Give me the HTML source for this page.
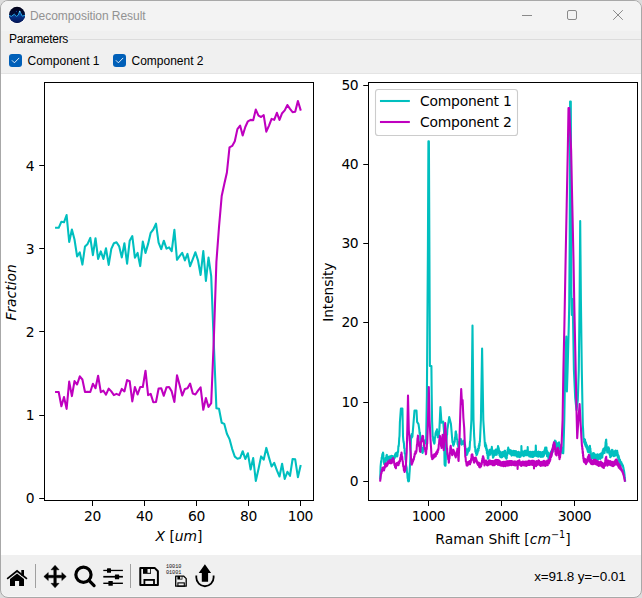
<!DOCTYPE html>
<html>
<head>
<meta charset="utf-8">
<title>Decomposition Result</title>
<style>
html,body{margin:0;padding:0;}
body{width:642px;height:598px;overflow:hidden;background:#dcdcdc;position:relative;font-family:"Liberation Sans",sans-serif;}
#win{position:absolute;left:0;top:0;width:640px;height:596px;border:1px solid #a8a8a8;box-shadow:inset 0 -1px 0 #f6f6f6;border-radius:8px;background:#f0f0f0;overflow:hidden;}
#title{position:absolute;left:0;top:0;width:640px;height:30px;background:#f3f3f3;}
#title .t{position:absolute;left:29px;top:8px;letter-spacing:-0.06px;font-size:12px;color:#929292;white-space:nowrap;}
#gb{position:absolute;left:8px;top:31px;letter-spacing:-0.3px;font-size:12px;color:#000;white-space:nowrap;line-height:14px;}
#gbline{position:absolute;left:68px;top:38px;width:572px;height:1px;background:#dcdcdc;}
.cb{position:absolute;top:53px;width:13px;height:13px;border-radius:3px;background:#005fb8;}
.cbl{position:absolute;top:53px;font-size:12px;line-height:14px;color:#000;white-space:nowrap;}
#canvas{position:absolute;left:0px;top:73px;width:640px;height:481px;background:#fff;}
#sep{position:absolute;left:0;top:72px;width:640px;height:1px;background:#e4e4e4;}
svg.plot{position:absolute;left:0;top:0;}
#status{position:absolute;right:15.5px;top:567.5px;letter-spacing:-0.15px;font-size:13.5px;line-height:15px;color:#000;white-space:nowrap;}
</style>
</head>
<body>
<div id="win">
  <div id="title"><span class="t">Decomposition Result</span></div>
  <div id="gb">Parameters</div>
  <div id="gbline"></div>
  <div class="cb" style="left:8px"></div><div class="cbl" style="left:26.5px">Component 1</div>
  <div class="cb" style="left:112px"></div><div class="cbl" style="left:130.5px">Component 2</div>
  <div id="sep"></div>
  <div id="canvas"></div>
  <div id="status">x=91.8 y=−0.01</div>
</div>
<svg class="plot" width="642" height="598" viewBox="0 0 642 598">
<g font-family="'DejaVu Sans', 'Liberation Sans', sans-serif" font-size="13.89" fill="#000">
<g fill="none" stroke-width="2.08" stroke-linejoin="round" stroke-linecap="square">
<polyline stroke="#00bfbf" points="56.1,227.8 58.7,227.8 61.4,221.7 64.0,222.3 66.6,215.0 69.2,242.0 71.9,229.5 74.5,239.5 77.1,256.4 79.8,252.4 82.4,264.6 85.0,246.4 87.6,243.9 90.3,237.9 92.9,255.2 95.5,238.2 98.1,258.9 100.8,251.4 103.4,258.9 106.0,248.3 108.7,264.9 111.3,248.9 113.9,243.2 116.5,242.2 119.2,246.4 121.8,257.4 124.4,243.2 127.1,263.7 129.7,240.7 132.3,236.1 134.9,257.7 137.6,252.9 140.2,266.1 142.8,241.6 145.5,252.9 148.1,243.9 150.7,232.8 153.3,229.5 156.0,223.6 158.6,242.6 161.2,249.1 163.8,240.7 166.5,248.6 169.1,247.4 171.7,251.1 174.4,229.8 177.0,259.8 179.6,256.2 182.2,252.8 184.9,260.4 187.5,253.9 190.1,266.2 192.8,259.2 195.4,252.2 198.0,260.4 200.6,275.0 203.3,251.0 205.9,280.9 208.5,257.5 211.2,276.2 213.8,343.0 216.4,408.2 219.0,408.8 221.7,422.7 224.3,423.9 226.9,433.8 229.5,439.1 232.2,449.1 234.8,456.6 237.4,458.7 240.1,458.0 242.7,451.2 245.3,459.0 247.9,453.3 250.6,469.4 253.2,458.0 255.8,481.0 258.5,469.0 261.1,456.4 263.7,459.7 266.3,447.9 269.0,457.6 271.6,466.5 274.2,462.8 276.9,470.4 279.5,476.5 282.1,463.7 284.7,478.9 287.4,471.8 290.0,475.8 292.6,459.0 295.2,459.4 297.9,477.2 300.5,466.1"/>
<polyline stroke="#bf00bf" points="56.1,392.0 58.7,392.0 61.4,406.2 64.0,397.0 66.6,408.9 69.2,381.6 71.9,396.1 74.5,381.1 77.1,384.5 79.8,376.3 82.4,379.5 85.0,392.0 87.6,391.7 90.3,392.0 92.9,383.8 95.5,388.2 98.1,375.7 100.8,392.2 103.4,390.7 106.0,394.7 108.7,388.6 111.3,391.4 113.9,395.1 116.5,393.9 119.2,395.1 121.8,388.9 124.4,391.4 127.1,380.1 129.7,381.3 132.3,401.4 134.9,387.0 137.6,394.5 140.2,387.0 142.8,387.0 145.5,370.7 148.1,395.1 150.7,393.9 153.3,402.3 156.0,402.0 158.6,388.5 161.2,388.2 163.8,395.8 166.5,387.4 169.1,387.0 171.7,391.4 174.4,402.0 177.0,375.3 179.6,385.1 182.2,395.5 184.9,388.9 187.5,388.2 190.1,383.6 192.8,393.6 195.4,394.5 198.0,390.7 200.6,387.4 203.3,409.8 205.9,398.0 208.5,407.0 211.2,403.2 213.8,340.0 216.4,262.0 219.0,227.0 221.7,196.0 224.3,184.0 226.9,172.5 229.5,147.3 232.2,145.9 234.8,141.2 237.4,129.1 240.1,125.6 242.7,135.5 245.3,127.0 247.9,121.3 250.6,119.9 253.2,120.3 255.8,109.6 258.5,115.6 261.1,117.0 263.7,115.2 266.3,131.7 269.0,125.6 271.6,118.9 274.2,119.9 276.9,112.8 279.5,119.9 282.1,113.2 284.7,110.4 287.4,105.0 290.0,108.9 292.6,112.1 295.2,111.8 297.9,101.0 300.5,109.6"/>
<polyline stroke="#00bfbf" points="380.2,478.5 380.6,466.4 381.1,461.1 381.4,462.3 381.7,457.5 382.0,458.4 382.1,456.4 382.4,454.0 382.7,455.8 383.0,452.6 383.2,453.1 383.5,456.9 383.8,458.0 384.1,463.4 384.3,464.2 384.6,462.9 384.9,464.8 385.2,461.9 385.4,463.0 385.7,462.4 386.0,457.6 386.3,457.9 386.5,455.3 386.8,454.9 387.1,458.8 387.4,457.8 387.6,459.7 387.9,460.9 388.2,457.8 388.5,460.2 388.7,458.6 389.0,456.6 389.3,460.3 389.6,457.0 389.9,459.9 390.2,456.3 390.3,458.6 390.6,459.8 390.9,456.5 391.2,458.7 391.5,455.9 391.8,459.3 392.0,457.0 392.3,456.0 392.6,458.9 392.9,456.4 393.2,459.8 393.5,457.1 393.7,458.6 394.0,459.4 394.3,456.0 394.6,458.2 394.8,456.4 395.1,454.3 395.4,456.8 395.7,453.2 396.0,456.2 396.3,452.8 396.4,453.7 396.7,455.4 397.0,452.9 397.3,456.4 397.5,455.3 397.8,451.5 398.1,451.9 398.4,446.1 398.6,446.5 398.9,444.2 399.2,438.5 399.5,436.0 399.9,422.0 400.9,408.5 402.4,408.5 403.0,436.0 403.3,440.1 403.6,442.1 403.9,443.1 404.2,448.3 404.5,448.3 404.8,453.8 404.9,453.1 405.2,453.9 405.5,459.5 405.8,460.1 406.1,465.2 406.4,466.4 406.7,467.9 407.0,472.8 407.3,473.2 407.6,478.3 407.9,478.6 408.0,480.7 408.3,481.4 408.6,478.5 408.9,481.2 409.1,479.6 409.4,474.4 409.7,470.4 410.0,464.7 410.2,461.9 411.1,435.5 411.4,437.5 411.7,434.1 412.0,437.4 412.3,435.3 412.4,436.6 413.5,423.0 414.5,410.5 416.5,410.5 417.1,421.9 418.5,424.1 419.3,429.6 419.6,433.4 419.9,432.4 420.2,436.0 420.5,440.8 420.8,443.2 421.1,448.0 421.4,450.2 421.7,447.9 422.0,451.8 422.3,449.4 422.6,453.0 422.8,452.4 423.1,449.0 423.4,449.8 423.7,445.6 424.0,445.9 424.3,441.4 424.4,442.5 424.7,444.0 425.0,440.3 425.3,442.9 425.6,439.9 425.9,443.3 426.1,441.4 426.9,395.0 427.9,250.0 428.4,141.4 428.9,141.4 429.4,250.0 429.9,366.0 431.4,366.0 431.7,395.0 432.1,421.5 432.7,436.9 433.0,436.8 433.3,440.9 433.6,439.2 433.9,443.0 434.2,441.3 434.3,443.6 434.6,442.7 434.9,437.5 435.2,437.6 435.5,433.6 435.8,432.1 436.1,434.6 436.4,430.9 436.7,432.9 437.0,429.3 437.1,430.9 437.4,434.4 437.7,432.3 438.0,437.4 438.2,436.9 438.5,433.6 438.8,435.5 439.1,431.1 439.3,431.4 440.4,407.0 441.5,422.6 443.2,421.5 444.0,431.0 444.6,464.5 444.9,465.6 445.2,462.8 445.5,465.6 445.6,464.0 446.5,440.0 446.8,435.4 447.1,434.8 447.4,428.8 447.6,428.1 449.2,417.1 450.9,423.7 452.2,439.2 452.5,442.3 452.8,441.7 453.1,444.7 453.4,445.8 453.7,442.4 454.0,444.4 454.3,441.8 454.4,442.5 454.7,441.7 455.0,437.2 455.3,437.3 455.6,431.9 455.9,431.4 456.2,434.8 456.5,434.2 456.8,439.3 457.0,439.2 457.3,439.4 457.6,444.1 457.9,443.0 458.1,445.8 458.4,447.0 458.7,443.1 459.0,445.3 459.2,443.6 459.5,441.7 459.8,443.8 460.1,439.5 460.4,442.0 460.5,440.0 460.8,438.9 461.1,442.9 461.4,440.4 461.7,444.6 462.0,444.0 462.3,442.0 462.6,444.0 462.9,441.5 463.2,442.8 463.5,441.0 463.8,440.6 464.1,444.4 464.4,442.3 464.7,446.4 465.0,444.5 465.3,446.9 465.6,449.2 465.9,448.7 466.2,452.7 466.5,451.4 466.8,455.2 466.9,454.6 467.2,452.1 467.5,453.7 467.8,449.4 468.1,452.0 468.4,448.2 468.6,449.1 468.9,450.9 469.2,447.6 469.4,449.8 469.7,447.3 470.0,441.5 470.3,440.7 470.5,436.6 471.4,420.0 472.5,325.5 473.5,420.0 474.2,436.6 474.5,440.6 474.7,445.5 474.9,447.6 475.2,447.2 475.4,451.6 475.7,449.9 476.0,453.5 476.2,451.4 476.5,455.1 476.6,454.2 476.9,452.1 477.1,454.5 477.4,450.4 477.6,452.8 477.9,448.7 478.2,449.8 478.5,450.7 478.7,445.8 479.0,448.2 479.2,443.7 479.5,445.8 479.7,441.5 479.9,442.1 480.9,420.0 482.1,348.5 483.3,420.0 484.8,443.2 485.0,446.1 485.3,442.9 485.5,447.2 485.7,444.3 485.9,448.4 486.2,445.5 486.4,450.2 486.5,448.7 486.7,448.2 486.9,453.2 487.2,449.8 487.4,455.3 487.6,452.8 487.8,458.5 488.0,454.9 488.1,457.5 488.3,458.8 488.5,454.4 488.7,455.9 488.9,451.5 489.2,452.0 489.4,453.5 489.6,449.8 489.8,454.5 490.0,450.9 490.2,454.6 490.4,453.1 490.6,451.3 490.8,453.1 491.0,449.6 491.2,452.5 491.4,448.8 491.6,451.4 491.8,446.8 492.0,448.7 492.2,451.7 492.4,449.9 492.6,455.7 492.8,452.1 493.0,457.8 493.1,456.4 493.3,454.0 493.5,457.0 493.7,452.5 493.9,456.3 494.1,452.0 494.2,455.2 494.4,450.7 494.6,454.3 494.8,452.0 495.0,450.9 495.2,454.5 495.4,450.6 495.5,454.0 495.7,449.6 495.9,454.9 496.1,451.6 496.3,454.8 496.4,453.1 496.6,449.8 496.8,454.8 496.9,449.7 497.1,452.5 497.3,449.0 497.5,452.4 497.7,447.9 497.8,451.8 498.0,446.0 498.1,448.7 498.3,451.0 498.5,447.4 498.6,452.3 498.8,448.5 499.0,453.5 499.2,450.6 499.4,455.2 499.5,451.7 499.7,454.2 499.9,456.2 500.1,452.8 500.2,457.0 500.4,451.7 500.6,456.8 500.8,452.2 501.0,456.2 501.1,453.1 501.3,457.4 501.4,455.3 501.6,453.2 501.8,457.1 501.9,453.7 502.1,457.1 502.3,452.4 502.5,456.2 502.7,452.1 502.8,456.3 503.0,454.2 503.2,452.5 503.4,455.7 503.5,452.1 503.7,455.6 503.9,452.5 504.1,456.1 504.3,452.0 504.4,455.0 504.6,450.9 504.7,453.1 504.9,456.3 505.1,450.9 505.2,456.9 505.4,453.3 505.6,457.7 505.8,454.5 506.0,458.2 506.1,454.7 506.3,458.8 506.4,457.5 506.6,454.0 506.8,458.1 506.9,453.2 507.1,455.7 507.3,451.9 507.5,454.0 507.7,449.5 507.8,453.1 508.0,449.8 508.2,447.5 508.4,451.5 508.5,449.4 508.7,452.7 508.9,449.4 509.1,453.0 509.3,449.5 509.4,453.4 509.6,449.7 509.8,453.4 510.0,452.0 510.2,450.0 510.4,454.3 510.5,450.5 510.7,454.3 510.9,450.2 511.0,453.0 511.2,454.4 511.4,451.1 511.5,455.6 511.7,451.4 511.9,453.2 512.1,455.2 512.3,451.5 512.4,455.0 512.6,451.7 512.8,453.4 513.0,454.9 513.2,450.7 513.3,455.1 513.5,451.2 513.7,453.1 513.9,455.2 514.1,451.0 514.2,455.5 514.4,451.1 514.6,452.7 514.8,455.1 515.0,451.3 515.1,455.3 515.3,451.4 515.5,453.0 515.7,454.8 515.9,451.0 516.0,455.7 516.2,451.6 516.4,453.8 516.6,455.7 516.8,452.1 516.9,456.6 517.1,452.2 517.3,454.7 517.5,456.5 517.7,452.3 517.8,456.8 518.0,452.5 518.2,454.8 518.4,456.8 518.6,451.8 518.7,456.4 518.9,452.9 519.1,454.6 519.3,457.0 519.5,453.4 519.6,457.1 519.8,452.7 520.0,454.5 520.2,456.5 520.4,452.4 520.5,456.8 520.7,452.4 520.9,454.3 521.1,455.8 521.3,451.7 521.4,446.0 521.6,451.8 521.8,454.1 522.0,455.1 522.2,451.4 522.3,455.5 522.5,452.4 522.7,453.8 522.9,455.2 523.1,451.5 523.2,454.8 523.4,451.9 523.6,453.4 523.8,456.1 524.0,451.5 524.1,455.3 524.3,451.3 524.5,453.0 524.7,454.8 524.9,450.8 525.0,454.1 525.2,450.7 525.4,452.8 525.6,455.2 525.8,451.3 525.9,454.8 526.1,450.9 526.3,452.9 526.5,454.2 526.7,451.1 526.8,455.3 527.0,450.5 527.2,453.1 527.4,454.9 527.6,452.0 527.7,447.0 527.9,451.8 528.1,453.5 528.3,455.3 528.5,452.7 528.6,455.5 528.8,451.6 529.0,454.0 529.2,456.4 529.4,452.1 529.5,456.3 529.7,452.6 529.9,454.5 530.1,456.0 530.3,452.9 530.4,456.6 530.6,451.8 530.8,454.6 531.0,456.8 531.2,452.6 531.3,456.7 531.5,453.2 531.7,454.6 531.9,456.1 532.1,452.8 532.2,456.9 532.4,451.7 532.6,454.6 532.8,456.7 533.0,452.1 533.1,457.0 533.3,452.8 533.5,454.4 533.7,456.4 533.9,451.9 534.0,456.2 534.2,452.0 534.4,453.8 534.6,455.7 534.8,451.5 534.9,455.2 535.1,451.3 535.3,453.2 535.5,455.8 535.7,451.1 535.8,445.5 536.0,451.4 536.2,453.5 536.4,456.0 536.6,452.7 536.7,455.5 536.9,451.7 537.1,453.9 537.3,456.3 537.5,452.0 537.6,456.5 537.8,452.6 538.0,454.3 538.2,456.7 538.4,451.5 538.5,456.0 538.7,452.4 538.9,454.4 539.1,456.3 539.3,452.3 539.4,456.2 539.6,452.2 539.8,454.6 540.0,456.3 540.2,453.1 540.3,456.6 540.5,452.0 540.7,454.7 540.9,456.9 541.1,452.7 541.2,456.2 541.4,453.1 541.6,454.7 541.8,456.7 542.0,452.4 542.1,456.0 542.3,452.6 542.5,454.3 542.7,456.6 542.9,452.1 543.0,456.6 543.2,451.7 543.4,454.0 543.6,456.0 543.8,451.4 543.9,455.8 544.1,451.9 544.3,453.9 544.5,453.6 544.7,449.5 544.8,452.3 545.0,449.2 545.2,447.6 545.4,451.9 545.5,448.2 545.7,452.6 545.9,449.0 546.1,453.7 546.3,450.4 546.4,447.5 546.6,450.4 546.8,452.9 547.0,456.2 547.2,451.0 547.3,455.7 547.5,452.2 547.7,455.9 547.9,452.3 548.1,456.7 548.2,453.6 548.4,458.3 548.6,453.0 548.8,458.2 549.0,453.3 549.1,457.3 549.3,454.2 549.5,458.4 549.6,456.6 549.8,454.4 550.0,458.1 550.1,453.2 550.3,457.3 550.5,453.3 550.7,457.2 550.9,451.7 551.0,456.1 551.2,451.2 551.4,454.9 551.6,450.7 551.8,453.9 551.9,450.3 552.1,453.3 552.3,449.5 552.4,451.0 552.6,451.9 552.8,448.1 552.9,450.9 553.1,446.2 553.3,450.1 553.5,445.2 553.7,448.8 553.8,444.3 554.0,446.9 554.2,442.8 554.4,446.1 554.6,441.9 554.7,445.1 554.9,440.6 555.1,441.8 555.3,444.2 555.5,441.0 555.6,445.4 555.8,441.3 556.0,445.9 556.2,443.0 556.4,447.5 556.5,443.9 556.7,448.0 556.9,445.1 557.0,447.3 557.2,449.2 557.4,443.9 557.5,448.5 557.7,444.0 557.9,448.0 558.1,443.1 558.3,447.3 558.4,442.8 558.6,447.0 558.8,443.7 559.0,442.3 559.2,446.8 559.3,444.0 559.5,448.0 559.7,444.5 559.9,448.1 560.1,445.6 560.2,449.4 560.4,446.4 560.6,451.2 560.7,449.2 560.9,447.6 561.1,452.1 561.2,447.3 561.4,451.1 561.6,447.7 561.8,452.8 562.0,448.1 562.1,452.3 562.3,447.9 562.5,452.0 562.7,448.4 562.9,453.1 563.0,448.9 563.2,453.3 563.4,451.0 564.3,420.0 565.3,360.0 566.3,336.5 566.9,391.5 567.6,370.0 568.8,325.0 569.2,305.0 569.7,240.0 570.0,150.0 570.1,101.6 570.8,101.6 571.0,150.0 571.1,200.0 571.3,290.0 571.8,315.0 572.6,299.0 573.2,330.0 573.9,370.0 575.2,398.0 576.5,410.0 577.8,400.0 578.8,370.0 579.6,300.0 580.2,221.0 580.9,300.0 581.8,370.0 582.8,425.0 583.0,427.5 583.2,431.5 583.3,433.6 583.5,437.5 583.7,440.0 583.9,438.9 584.1,442.3 584.2,438.9 584.4,443.3 584.6,439.2 584.8,444.4 585.0,439.6 585.1,444.6 585.3,441.4 585.5,445.9 585.7,442.2 585.9,445.9 586.0,442.7 586.2,447.2 586.4,445.5 586.6,444.5 586.8,448.8 586.9,445.2 587.1,449.2 587.3,446.0 587.5,450.6 587.7,447.4 587.8,451.8 588.0,447.5 588.2,452.3 588.3,451.0 588.5,448.8 588.7,452.2 588.8,447.6 589.0,451.5 589.2,447.6 589.4,450.5 589.6,446.5 589.7,449.6 589.9,445.8 590.0,447.6 590.2,451.0 590.4,448.6 590.5,454.2 590.7,451.3 590.9,457.3 591.1,456.4 591.3,454.7 591.5,458.7 591.6,454.1 591.8,458.1 592.0,454.9 592.2,458.0 592.4,454.0 592.5,458.0 592.7,454.0 592.9,457.2 593.1,453.0 593.3,455.3 593.5,457.3 593.7,453.9 593.8,458.1 594.0,453.2 594.2,457.7 594.4,454.7 594.6,458.4 594.7,454.8 594.9,459.1 595.1,455.4 595.3,459.5 595.5,457.5 595.7,454.5 595.9,459.9 596.0,455.3 596.2,459.4 596.4,455.0 596.6,459.1 596.8,455.4 596.9,459.8 597.1,455.0 597.3,459.2 597.5,454.4 597.7,457.0 597.9,459.6 598.1,455.0 598.2,458.8 598.4,455.3 598.6,458.7 598.8,455.1 599.0,458.6 599.1,455.2 599.3,458.6 599.5,454.2 599.7,458.4 599.9,456.4 600.1,454.2 600.3,458.9 600.4,454.5 600.6,458.4 600.8,453.5 601.0,458.1 601.2,453.8 601.3,457.6 601.5,453.6 601.7,457.3 601.9,453.0 602.1,455.3 602.3,457.4 602.5,451.9 602.6,454.9 602.8,450.3 603.0,453.9 603.2,450.9 603.4,448.9 603.6,452.9 603.7,448.7 603.9,452.7 604.1,448.8 604.3,453.0 604.5,449.4 604.6,453.0 604.8,448.7 604.9,450.9 605.1,450.6 605.3,445.7 605.4,447.2 605.6,442.0 605.8,443.6 606.0,439.8 606.2,439.5 606.4,445.1 606.5,443.4 606.7,449.4 606.9,447.2 607.1,450.9 607.3,452.5 607.5,449.0 607.6,452.5 607.8,448.2 608.0,451.9 608.2,448.0 608.4,452.4 608.5,447.2 608.7,452.1 608.8,449.8 609.0,448.4 609.2,452.9 609.3,449.5 609.5,454.3 609.7,450.8 609.9,455.5 610.1,452.3 610.2,457.3 610.4,455.3 610.6,452.6 610.8,456.5 610.9,451.8 611.1,456.4 611.3,451.6 611.5,454.7 611.7,450.7 611.8,454.4 612.0,449.9 612.1,452.0 612.3,453.9 612.5,450.1 612.6,454.5 612.8,451.3 613.0,455.4 613.2,451.9 613.4,455.9 613.5,451.6 613.7,454.2 613.9,456.2 614.1,452.7 614.2,455.0 614.4,451.3 614.6,455.5 614.8,451.4 615.0,455.8 615.1,451.4 615.3,454.6 615.4,453.1 615.6,450.5 615.8,455.3 615.9,450.8 616.1,454.6 616.3,450.8 616.5,454.7 616.7,451.6 616.8,454.0 617.0,452.6 617.2,450.7 617.4,456.0 617.5,452.3 617.7,457.2 617.9,454.3 618.1,456.4 618.3,459.2 618.5,455.5 618.6,460.1 618.8,456.4 619.0,461.3 619.2,458.0 619.4,462.1 619.5,459.4 619.7,462.5 619.8,462.0 620.0,459.9 620.2,463.6 620.3,461.7 620.5,464.4 620.7,461.6 620.9,464.3 621.1,462.1 621.2,464.7 621.4,462.3 621.5,463.6 621.7,464.9 621.9,463.8 622.0,465.5 622.2,464.2 622.4,466.2 622.6,465.0 622.8,466.3 622.9,465.5 623.1,466.4 623.3,467.8 623.5,467.8 623.6,469.4 623.8,469.8 624.0,471.1 624.2,471.9 624.4,473.6 624.6,475.4 624.7,477.2 624.9,478.9 625.1,480.7"/>
<polyline stroke="#bf00bf" points="380.2,480.7 381.1,473.3 381.4,473.6 381.5,471.9 381.8,469.9 382.1,471.5 382.4,467.9 382.7,469.5 382.8,468.6 383.1,467.5 383.4,470.3 383.7,467.9 384.0,470.5 384.3,469.1 384.6,466.7 384.9,467.8 385.2,463.8 385.4,464.2 385.7,465.7 386.0,463.4 386.3,466.5 386.6,463.7 386.9,465.9 387.0,464.7 387.3,463.3 387.6,464.8 387.9,461.5 388.1,462.5 388.4,463.6 388.7,461.2 389.0,463.2 389.3,460.6 389.6,462.5 389.8,461.4 390.1,460.1 390.4,463.0 390.7,461.3 391.0,463.4 391.3,461.1 391.5,462.5 391.8,463.0 392.1,459.7 392.4,461.0 392.7,458.3 393.0,459.6 393.1,458.1 393.4,458.3 393.7,461.8 394.0,460.9 394.2,463.0 394.5,465.2 394.8,463.6 395.1,467.2 395.4,465.6 395.6,467.5 395.9,468.3 396.2,464.9 396.5,466.0 396.8,463.1 397.0,463.6 397.3,464.9 397.6,462.7 397.9,465.0 398.2,462.4 398.5,465.2 398.6,464.2 398.9,462.3 399.2,463.6 399.5,460.9 399.7,461.4 400.0,461.3 400.3,457.7 400.6,459.1 400.9,454.9 401.2,455.9 401.5,452.6 401.6,453.1 401.9,456.5 402.2,456.8 402.5,460.9 402.8,461.4 403.0,464.2 403.3,466.6 403.6,466.2 403.9,470.4 404.2,468.8 404.5,471.9 404.8,471.6 405.1,468.3 405.4,469.8 405.7,465.8 405.8,466.4 406.1,461.9 406.4,456.4 406.7,452.0 407.3,430.0 408.0,395.5 408.8,430.0 409.1,434.2 409.4,435.4 409.7,441.0 409.8,441.0 410.1,444.7 410.4,449.8 410.7,452.7 411.0,458.0 411.3,460.9 411.5,464.2 411.8,464.6 412.1,461.5 412.4,463.2 412.7,460.6 413.0,461.7 413.3,459.0 413.5,459.7 413.8,459.7 414.1,456.6 414.4,457.0 414.7,453.7 415.0,454.6 415.2,453.1 415.5,451.2 415.8,453.5 416.1,451.0 416.3,452.0 416.6,449.8 416.9,445.0 417.2,444.0 417.5,438.6 417.8,437.2 417.9,435.5 418.2,436.7 418.5,441.4 418.8,441.5 419.1,446.1 419.3,446.5 419.6,446.7 419.9,451.3 420.2,450.4 420.3,452.0 420.6,448.7 420.9,443.4 421.1,441.4 421.4,441.8 421.7,438.6 422.0,439.6 422.3,436.1 422.6,438.1 422.8,435.8 423.1,436.2 423.4,441.4 423.7,441.1 424.0,445.6 424.3,445.1 424.4,446.9 424.7,449.2 425.0,448.0 425.3,451.6 425.6,450.5 425.9,454.3 426.1,453.5 426.4,449.5 426.7,449.3 427.0,443.6 427.2,443.6 428.0,420.0 428.8,387.0 429.6,420.0 430.5,439.2 430.8,444.5 431.1,448.4 431.4,454.2 431.6,456.8 431.9,455.7 432.2,459.2 432.5,456.5 432.7,457.9 433.0,458.6 433.3,455.4 433.6,457.8 433.8,455.7 434.1,454.4 434.4,456.9 434.7,454.1 435.0,456.6 435.3,453.8 435.5,455.2 435.8,456.2 436.1,452.6 436.4,454.5 436.7,451.7 437.0,454.0 437.1,452.4 437.4,450.4 437.7,452.3 438.0,449.2 438.2,450.2 438.5,448.7 438.8,444.3 439.1,443.6 439.4,439.1 439.7,438.5 439.9,435.8 440.2,436.6 440.5,441.6 440.8,441.2 441.1,446.3 441.4,446.2 441.5,448.0 441.8,445.2 442.1,439.7 442.4,438.1 442.6,434.7 442.9,438.3 443.2,443.9 443.5,446.8 443.7,450.2 445.2,423.1 446.5,443.6 446.8,447.8 447.1,448.5 447.4,453.9 447.6,454.6 447.9,455.0 448.2,459.4 448.5,458.9 448.8,462.7 448.9,462.3 449.2,458.3 449.5,458.5 449.8,452.9 450.1,452.8 450.4,447.3 450.7,445.8 451.0,448.8 451.3,448.7 451.6,453.1 451.9,453.2 452.0,454.6 452.3,455.1 452.6,451.6 452.9,453.2 453.1,451.3 453.4,449.8 453.7,453.1 454.0,451.1 454.2,452.4 454.5,454.3 454.8,453.0 455.1,455.8 455.4,454.2 455.7,457.5 455.9,456.8 456.2,454.3 456.5,455.2 456.8,451.3 457.1,452.6 457.4,448.5 457.5,449.1 457.8,453.1 458.1,454.6 458.4,460.2 458.6,461.0 459.5,439.0 460.4,410.0 461.2,389.0 462.0,404.0 462.6,400.0 463.4,418.0 464.2,428.0 465.3,456.8 465.6,457.5 465.9,461.7 466.2,461.6 466.4,463.5 466.7,465.5 467.0,463.4 467.2,464.2 467.5,465.6 467.8,462.4 468.1,464.6 468.4,461.7 468.7,464.0 468.8,462.5 469.1,461.7 469.4,464.3 469.7,461.0 470.0,464.3 470.3,461.3 470.5,463.0 470.8,462.5 471.1,458.9 471.4,459.4 471.6,454.9 471.9,456.3 472.1,454.2 472.4,454.5 472.7,457.8 472.9,456.8 473.2,460.5 473.5,458.9 473.8,461.9 474.1,462.7 474.3,459.3 474.6,461.2 474.9,457.8 475.2,459.9 475.5,457.5 475.8,457.5 476.0,460.6 476.3,459.0 476.6,462.5 476.8,460.6 477.1,463.0 477.4,464.0 477.6,462.3 477.9,464.8 478.1,462.6 478.4,465.2 478.6,462.6 478.8,464.2 479.1,466.5 479.3,463.7 479.5,467.2 479.8,463.4 480.0,467.4 480.3,465.1 480.4,466.4 480.6,466.9 480.9,464.3 481.1,466.3 481.4,463.7 481.5,464.2 481.7,464.8 482.0,460.6 482.2,462.3 482.4,458.6 482.7,460.3 482.9,456.4 483.2,456.4 483.4,459.8 483.7,458.0 483.9,462.8 484.1,461.5 484.3,464.2 484.5,465.5 484.7,461.4 485.0,464.3 485.2,461.3 485.4,464.1 485.6,460.5 485.9,461.9 486.1,463.6 486.3,460.5 486.5,464.3 486.8,461.7 487.0,465.2 487.2,461.9 487.4,465.4 487.6,464.2 487.8,462.6 488.0,465.2 488.2,462.0 488.4,464.1 488.6,462.3 488.8,460.9 489.0,464.0 489.2,460.7 489.4,464.5 489.5,462.4 489.7,460.4 489.9,463.7 490.1,461.1 490.3,464.0 490.4,462.5 490.6,460.8 490.8,464.2 491.0,461.1 491.2,464.2 491.3,462.7 491.5,461.1 491.7,463.9 491.9,461.0 492.1,464.2 492.2,462.9 492.4,461.1 492.6,465.3 492.8,461.3 492.9,465.0 493.1,463.1 493.3,462.0 493.5,465.1 493.6,461.8 493.8,465.0 494.0,463.3 494.2,460.7 494.4,465.1 494.5,461.1 494.7,465.0 494.9,462.6 495.1,460.3 495.3,464.4 495.4,460.9 495.6,463.4 495.8,461.9 496.0,459.9 496.2,463.9 496.3,460.1 496.5,463.6 496.7,461.9 496.9,460.4 497.1,463.7 497.2,460.0 497.4,464.0 497.6,462.1 497.8,460.5 498.0,464.9 498.1,460.1 498.3,463.5 498.5,462.3 498.7,460.4 498.9,463.9 499.0,460.9 499.2,463.4 499.4,462.7 499.6,460.8 499.8,465.3 499.9,461.5 500.1,464.4 500.3,463.4 500.5,461.8 500.7,465.3 500.8,462.6 501.0,465.7 501.2,464.2 501.4,462.5 501.6,465.8 501.7,462.8 501.9,465.7 502.1,464.2 502.3,462.5 502.5,465.5 502.6,462.0 502.8,465.4 503.0,464.0 503.2,462.3 503.4,466.1 503.5,461.9 503.7,466.1 503.9,463.9 504.1,462.5 504.3,465.8 504.4,462.2 504.6,465.3 504.8,463.7 505.0,461.7 505.2,465.2 505.3,461.7 505.5,466.1 505.7,463.5 505.9,462.2 506.1,464.9 506.2,462.2 506.4,464.7 506.6,463.4 506.8,462.1 507.0,465.4 507.1,461.1 507.3,465.3 507.5,463.4 507.7,461.7 507.9,465.7 508.0,461.5 508.2,464.5 508.4,463.4 508.6,461.4 508.8,465.0 508.9,461.2 509.1,465.1 509.3,463.3 509.5,461.3 509.7,465.2 509.8,461.3 510.0,464.7 510.2,463.2 510.4,461.3 510.6,464.5 510.7,461.1 510.9,464.5 511.1,463.1 511.3,461.1 511.5,465.1 511.6,461.8 511.8,464.7 512.0,463.1 512.2,461.4 512.4,464.3 512.5,461.8 512.7,464.8 512.9,463.2 513.1,461.7 513.3,465.0 513.4,461.7 513.6,464.6 513.8,463.3 514.0,461.9 514.2,465.2 514.3,462.0 514.5,465.0 514.7,463.5 514.9,461.4 515.1,465.4 515.2,461.8 515.4,465.4 515.6,463.6 515.8,461.9 516.0,465.2 516.1,462.7 516.3,464.9 516.5,463.7 516.7,461.7 516.9,464.7 517.0,461.5 517.2,465.7 517.4,463.3 517.6,469.0 517.8,465.3 517.9,461.0 518.1,464.4 518.3,462.9 518.5,460.8 518.7,464.4 518.8,461.1 519.0,464.0 519.2,462.5 519.4,460.3 519.6,464.6 519.7,461.4 519.9,464.6 520.1,463.2 520.3,462.0 520.5,465.1 520.6,462.2 520.8,465.7 521.0,463.9 521.2,462.4 521.4,465.9 521.5,462.1 521.7,465.4 521.9,463.8 522.1,461.7 522.3,464.9 522.4,462.2 522.6,465.1 522.8,463.7 523.0,461.5 523.2,464.7 523.3,462.2 523.5,465.2 523.7,463.6 523.9,462.0 524.1,465.4 524.2,461.9 524.4,465.3 524.6,463.6 524.8,462.9 525.0,464.9 525.1,461.9 525.3,465.5 525.5,463.6 525.7,461.9 525.9,465.3 526.0,461.6 526.2,465.9 526.4,463.6 526.6,462.6 526.8,465.5 526.9,461.9 527.1,465.5 527.3,463.4 527.5,461.7 527.7,465.0 527.8,461.8 528.0,464.8 528.2,463.2 528.4,460.8 528.6,464.8 528.7,462.0 528.9,464.9 529.1,463.0 529.3,460.9 529.5,464.9 529.6,461.1 529.8,464.4 530.0,462.8 530.2,461.2 530.4,464.8 530.5,461.4 530.7,464.1 530.9,462.8 531.1,461.1 531.3,464.3 531.4,461.1 531.6,464.4 531.8,462.8 532.0,460.8 532.2,464.9 532.3,460.7 532.5,464.7 532.7,462.8 532.9,461.2 533.1,464.4 533.2,461.3 533.4,464.9 533.6,463.0 533.8,460.8 534.0,468.5 534.1,461.6 534.3,464.7 534.5,463.3 534.7,461.5 534.9,465.0 535.0,462.3 535.2,465.2 535.4,463.6 535.6,461.7 535.8,465.8 535.9,461.9 536.1,466.2 536.3,463.9 536.5,462.0 536.7,465.0 536.8,461.0 537.0,465.2 537.2,463.3 537.4,462.1 537.6,464.8 537.7,461.9 537.9,464.4 538.1,462.4 538.3,461.0 538.5,464.1 538.6,460.4 538.8,463.8 539.0,462.6 539.2,460.9 539.4,464.8 539.5,462.0 539.7,465.2 539.9,463.5 540.1,461.7 540.3,465.4 540.4,462.4 540.6,465.9 540.8,464.1 541.0,463.0 541.2,465.7 541.3,461.9 541.5,465.4 541.7,463.8 541.9,462.4 542.1,465.1 542.2,462.3 542.4,465.5 542.6,463.5 542.8,461.8 543.0,465.2 543.1,461.2 543.3,465.4 543.5,463.3 543.7,461.7 543.9,465.3 544.0,460.9 544.2,464.7 544.4,463.2 544.6,461.7 544.8,464.9 544.9,462.0 545.0,464.0 545.2,466.0 545.4,461.6 545.5,464.6 545.7,461.7 545.9,465.4 546.1,461.5 546.3,465.2 546.4,461.3 546.6,464.3 546.8,461.3 547.0,464.5 547.2,460.5 547.3,464.5 547.5,461.4 547.7,465.1 547.9,460.4 548.1,464.0 548.2,461.1 548.4,463.8 548.6,459.9 548.7,462.0 548.9,463.4 549.1,459.8 549.2,462.3 549.4,459.2 549.6,461.7 549.8,457.4 550.0,460.9 550.1,456.6 550.3,459.9 550.5,455.1 550.7,457.7 550.9,454.1 551.0,457.1 551.2,452.9 551.4,454.7 551.6,455.9 551.8,451.2 551.9,454.2 552.1,449.6 552.3,452.7 552.5,448.7 552.7,451.6 552.8,447.2 553.0,449.3 553.2,445.1 553.4,448.2 553.6,443.9 553.7,446.3 553.9,442.3 554.1,445.0 554.2,442.7 554.4,442.5 554.6,446.5 554.7,443.9 554.9,449.5 555.1,446.8 555.3,451.9 555.5,448.7 555.6,454.2 555.8,451.8 556.0,454.7 556.2,455.1 556.4,451.5 556.5,455.5 556.7,451.2 556.9,453.3 557.1,449.3 557.3,452.8 557.4,448.9 557.6,451.7 557.8,447.7 557.9,449.2 558.1,451.0 558.3,449.2 558.4,453.5 558.6,451.1 558.8,455.5 559.0,452.6 559.2,457.5 559.3,455.5 559.5,459.2 559.7,458.4 559.9,454.9 560.1,457.2 560.2,452.1 560.4,454.9 560.6,449.7 560.8,451.5 561.0,446.9 561.1,448.8 561.3,444.3 561.5,446.3 561.6,443.7 562.6,420.0 563.4,370.0 564.4,325.0 565.6,260.0 566.7,205.0 567.8,150.0 568.5,108.0 569.2,108.0 570.1,128.0 571.1,150.0 572.3,205.0 573.5,260.0 574.3,305.0 575.7,370.0 576.5,410.0 577.2,438.1 578.4,420.0 579.6,404.1 580.7,425.0 580.9,427.6 581.1,431.4 581.2,433.8 581.4,437.5 581.6,439.9 581.8,443.7 582.0,446.4 582.2,446.1 582.3,449.3 582.5,448.4 582.7,453.2 582.9,451.6 583.1,456.3 583.2,454.6 583.4,459.0 583.6,457.8 583.7,460.2 583.9,461.6 584.1,458.5 584.2,462.1 584.4,459.1 584.6,462.2 584.8,459.2 585.0,462.4 585.1,459.0 585.3,463.3 585.5,459.5 585.7,462.8 585.9,460.1 586.0,464.1 586.2,459.9 586.4,462.1 586.6,463.2 586.8,459.7 586.9,462.3 587.1,459.3 587.3,462.0 587.5,458.9 587.7,461.6 587.8,457.1 588.0,461.0 588.2,457.2 588.4,459.9 588.6,455.5 588.7,459.2 588.9,454.9 589.1,458.1 589.2,456.6 589.4,455.4 589.6,460.2 589.7,457.9 589.9,462.0 590.0,460.8 590.2,459.2 590.4,462.2 590.5,459.2 590.7,463.4 590.9,459.5 591.1,463.5 591.3,460.5 591.4,464.0 591.6,460.7 591.8,463.9 592.0,460.8 592.2,462.5 592.4,464.3 592.6,460.8 592.7,463.6 592.9,460.5 593.1,464.3 593.3,460.1 593.5,463.9 593.6,460.3 593.8,463.8 594.0,460.3 594.2,463.1 594.4,461.4 594.6,459.9 594.8,463.0 594.9,460.1 595.1,464.0 595.3,459.7 595.5,463.6 595.7,460.1 595.8,463.4 596.0,460.8 596.2,464.4 596.4,460.5 596.6,462.5 596.8,464.7 597.0,460.8 597.1,464.5 597.3,461.6 597.5,464.0 597.7,461.7 597.9,465.1 598.0,462.0 598.2,465.4 598.4,461.5 598.6,465.9 598.8,464.2 599.0,462.5 599.2,465.6 599.3,462.4 599.5,465.8 599.7,462.5 599.9,465.1 600.1,462.9 600.2,464.4 600.4,461.9 600.6,464.9 600.8,461.5 601.0,463.6 601.2,465.8 601.4,462.2 601.5,465.7 601.7,462.6 601.9,466.4 602.1,462.9 602.3,466.9 602.4,463.8 602.6,466.5 602.8,463.7 603.0,467.4 603.2,465.8 603.4,464.0 603.6,467.2 603.7,464.0 603.9,467.9 604.1,463.4 604.3,466.3 604.5,463.4 604.6,466.0 604.8,463.6 604.9,464.2 605.1,465.6 605.3,460.4 605.4,462.0 605.6,458.3 605.8,460.3 606.0,457.5 606.2,456.8 606.4,461.3 606.5,459.2 606.7,463.3 606.9,460.8 607.1,464.2 607.3,465.6 607.5,462.5 607.6,465.4 607.8,462.2 608.0,465.0 608.2,460.6 608.4,464.8 608.5,460.9 608.7,464.4 608.8,462.5 609.0,461.2 609.2,463.8 609.3,461.7 609.5,464.4 609.7,461.5 609.9,464.8 610.1,461.1 610.2,464.9 610.4,461.9 610.6,465.1 610.8,461.7 611.0,463.6 611.2,465.2 611.4,461.9 611.5,465.1 611.7,462.0 611.9,465.6 612.1,461.9 612.3,465.9 612.4,462.0 612.6,465.6 612.8,462.5 613.0,466.2 613.2,464.2 613.4,462.5 613.6,465.9 613.7,462.9 613.9,465.5 614.1,461.8 614.3,465.0 614.5,461.2 614.6,465.0 614.8,463.0 615.0,461.0 615.2,463.5 615.3,460.6 615.5,464.4 615.7,459.9 615.9,463.1 616.1,459.5 616.2,462.5 616.4,459.5 616.5,460.8 616.7,462.7 616.9,460.1 617.0,464.0 617.2,461.1 617.4,465.1 617.6,464.2 617.8,462.4 618.0,466.0 618.1,463.1 618.3,466.3 618.5,463.7 618.7,467.7 618.9,464.2 619.0,467.7 619.2,466.4 619.4,464.3 619.6,467.9 619.7,465.7 619.9,468.8 620.1,465.7 620.3,469.1 620.5,466.6 620.6,469.5 620.8,467.3 620.9,468.6 621.1,469.5 621.3,468.7 621.4,470.4 621.6,469.2 621.8,471.0 622.0,470.0 622.2,471.7 622.3,470.6 622.5,472.4 622.6,471.9 622.8,472.1 623.0,473.4 623.1,473.2 623.3,474.5 623.5,474.3 623.7,475.2 623.9,476.3 624.1,476.9 624.2,478.0 624.4,478.8 624.6,479.7 624.8,480.7"/>
</g>
<g fill="none" stroke="#000" stroke-width="1" shape-rendering="crispEdges">
<rect x="44.5" y="82.5" width="269" height="418"/>
<rect x="368.5" y="82.5" width="269" height="418"/>
<line x1="92.5" y1="501" x2="92.5" y2="505.5"/>
<line x1="144.5" y1="501" x2="144.5" y2="505.5"/>
<line x1="196.5" y1="501" x2="196.5" y2="505.5"/>
<line x1="248.5" y1="501" x2="248.5" y2="505.5"/>
<line x1="300.5" y1="501" x2="300.5" y2="505.5"/>
<line x1="428.5" y1="501" x2="428.5" y2="505.5"/>
<line x1="501.5" y1="501" x2="501.5" y2="505.5"/>
<line x1="574.5" y1="501" x2="574.5" y2="505.5"/>
</g>
<rect x="39.25" y="498.0" width="5" height="1"/>
<rect x="39.25" y="415.0" width="5" height="1"/>
<rect x="39.25" y="331.0" width="5" height="1"/>
<rect x="39.25" y="248.0" width="5" height="1"/>
<rect x="39.25" y="165.0" width="5" height="1"/>
<rect x="363.25" y="481.0" width="5" height="1"/>
<rect x="363.25" y="402.0" width="5" height="1"/>
<rect x="363.25" y="322.0" width="5" height="1"/>
<rect x="363.25" y="243.0" width="5" height="1"/>
<rect x="363.25" y="164.0" width="5" height="1"/>
<rect x="363.25" y="85.0" width="5" height="1"/>
<text x="92.4" y="521" text-anchor="middle" letter-spacing="-0.45">20</text>
<text x="144.4" y="521" text-anchor="middle" letter-spacing="-0.45">40</text>
<text x="196.4" y="521" text-anchor="middle" letter-spacing="-0.45">60</text>
<text x="248.4" y="521" text-anchor="middle" letter-spacing="-0.45">80</text>
<text x="300.4" y="521" text-anchor="middle" letter-spacing="-0.45">100</text>
<text x="34.1" y="503" text-anchor="end" letter-spacing="-0.45">0</text>
<text x="34.1" y="420" text-anchor="end" letter-spacing="-0.45">1</text>
<text x="34.1" y="337" text-anchor="end" letter-spacing="-0.45">2</text>
<text x="34.1" y="254" text-anchor="end" letter-spacing="-0.45">3</text>
<text x="34.1" y="171" text-anchor="end" letter-spacing="-0.45">4</text>
<text x="428.4" y="521" text-anchor="middle" letter-spacing="-0.45">1000</text>
<text x="501.4" y="521" text-anchor="middle" letter-spacing="-0.45">2000</text>
<text x="574.4" y="521" text-anchor="middle" letter-spacing="-0.45">3000</text>
<text x="358.2" y="486" text-anchor="end" letter-spacing="-0.45">0</text>
<text x="358.2" y="407" text-anchor="end" letter-spacing="-0.45">10</text>
<text x="358.2" y="327" text-anchor="end" letter-spacing="-0.45">20</text>
<text x="358.2" y="248" text-anchor="end" letter-spacing="-0.45">30</text>
<text x="358.2" y="169" text-anchor="end" letter-spacing="-0.45">40</text>
<text x="358.2" y="90" text-anchor="end" letter-spacing="-0.45">50</text>
<text x="179" y="540.5" text-anchor="middle"><tspan font-style="italic">X</tspan> [<tspan font-style="italic">um</tspan>]</text>
<text transform="translate(16.4,292.4) rotate(-90)" text-anchor="middle" font-style="italic">Fraction</text>
<text x="503" y="543.5" text-anchor="middle">Raman Shift [<tspan font-style="italic">cm</tspan><tspan font-size="9.7" dy="-5.3">−1</tspan><tspan dy="5.3">]</tspan></text>
<text transform="translate(333.4,292.2) rotate(-90)" text-anchor="middle" letter-spacing="-0.15">Intensity</text>
<rect x="375.5" y="89.5" width="142" height="46" rx="2.8" ry="2.8" fill="#fff" fill-opacity="0.8" stroke="#ccc" stroke-width="1.1"/>
<line x1="381" y1="101" x2="408.8" y2="101" stroke="#00bfbf" stroke-width="2.08" stroke-linecap="square"/>
<line x1="381" y1="122" x2="408.8" y2="122" stroke="#bf00bf" stroke-width="2.08" stroke-linecap="square"/>
<text x="420" y="106" letter-spacing="-0.2">Component 1</text>
<text x="420" y="127" letter-spacing="-0.2">Component 2</text>
</g>
</svg>
<svg class="plot" width="642" height="598" viewBox="0 0 642 598">
<defs>
<clipPath id="icl"><circle cx="17.05" cy="14.85" r="8.05"/></clipPath>
<linearGradient id="ibg" x1="0" y1="0" x2="0" y2="1"><stop offset="0" stop-color="#010218"/><stop offset="0.55" stop-color="#03103f"/><stop offset="1" stop-color="#020a3a"/></linearGradient>
<linearGradient id="ifill" x1="0" y1="0" x2="0" y2="1"><stop offset="0" stop-color="#0f5cb4"/><stop offset="0.45" stop-color="#083083"/><stop offset="1" stop-color="#030f4c"/></linearGradient>
</defs>
<circle cx="17.05" cy="14.85" r="8.9" fill="#fafafa"/>
<circle cx="17.05" cy="14.85" r="8.05" fill="url(#ibg)"/>
<g clip-path="url(#icl)">
<path d="M8.5,15.1 L11.4,16.4 L14.3,14.2 L16.6,16.4 L18.3,15.0 L19.6,11.4 L20.9,13.4 L22.3,16.2 L25.6,15.0 V24 H8.5 Z" fill="url(#ifill)"/>
<path d="M8.5,15.1 L11.4,16.4 L14.3,14.2 L16.6,16.4 L18.3,15.0 L19.6,11.4 L20.9,13.4 L22.3,16.2 L25.6,15.0" fill="none" stroke="#25a6e6" stroke-width="1.0" stroke-linejoin="round"/>
<circle cx="19.7" cy="11.6" r="0.8" fill="#7fe0ff"/>
<circle cx="16.4" cy="11.4" r="0.6" fill="#0c3a96"/>
</g>
<g fill="none" stroke="#8a8a8a" stroke-width="1">
<line x1="522" y1="15.5" x2="532" y2="15.5"/>
<rect x="567.5" y="10.5" width="9" height="9" rx="1.5" ry="1.5"/>
<path d="M613.2,10.2 L622.8,19.8 M622.8,10.2 L613.2,19.8"/>
</g>
<path d="M12.2,60.6 L14.4,62.8 L18.9,58.2" fill="none" stroke="#fff" stroke-opacity="0.92" stroke-width="0.95" stroke-linecap="round" stroke-linejoin="round"/>
<path d="M116.2,60.6 L118.4,62.8 L122.9,58.2" fill="none" stroke="#fff" stroke-opacity="0.92" stroke-width="0.95" stroke-linecap="round" stroke-linejoin="round"/>
<g stroke="#a0a0a0" stroke-width="1" shape-rendering="crispEdges">
<line x1="35.5" y1="564" x2="35.5" y2="588"/>
<line x1="130.5" y1="564" x2="130.5" y2="588"/>
</g>
<g fill="#000" stroke="none">
<path d="M7.7,578.4 L17.05,571.0 L26.4,578.4" fill="none" stroke="#000" stroke-width="1.8" stroke-linecap="round" stroke-linejoin="miter"/>
<rect x="21.3" y="570" width="2.7" height="5.6"/>
<path d="M10,579.1 L17.05,573.5 L24,579.0 V585.9 H19.1 V581.1 H15 V585.9 H10 Z"/>
<path d="M55.05,565.3499999999999 L59.05,569.7499999999999 L56.3,569.7499999999999 L56.3,575.3 L61.85,575.3 L61.85,572.55 L66.25,576.55 L61.85,580.55 L61.85,577.8 L56.3,577.8 L56.3,583.35 L59.05,583.35 L55.05,587.75 L51.05,583.35 L53.8,583.35 L53.8,577.8 L48.24999999999999,577.8 L48.24999999999999,580.55 L43.849999999999994,576.55 L48.24999999999999,572.55 L48.24999999999999,575.3 L53.8,575.3 L53.8,569.7499999999999 L51.05,569.7499999999999 Z" stroke="#000" stroke-width="0.5" stroke-linejoin="round"/>
<circle cx="83.45" cy="574.8" r="7.6" fill="none" stroke="#000" stroke-width="3.2"/>
<line x1="88.9" y1="580.4" x2="94.1" y2="585.6" stroke="#000" stroke-width="3.2" stroke-linecap="round"/>
<rect x="103.3" y="569.8" width="19.6" height="1.3"/>
<rect x="103.3" y="575.9" width="19.6" height="1.7"/>
<rect x="103.3" y="582.6" width="19.6" height="1.4"/>
<rect x="107" y="568.3" width="4" height="4.5" rx="0.5"/>
<rect x="114.9" y="574.6" width="4.3" height="4.6" rx="0.5"/>
<rect x="108.4" y="581.1" width="4.4" height="4.6" rx="0.5"/>
<path d="M140.3,567.9 H154.6 L157.9,571.2 V585 H140.3 Z" fill="none" stroke="#000" stroke-width="2" stroke-linejoin="round"/>
<rect x="143" y="568" width="8" height="5.8"/>
<rect x="147.5" y="569" width="2.7" height="3.8" fill="#f0f0f0"/>
<rect x="144.4" y="579.9" width="9.6" height="5.1" fill="none" stroke="#000" stroke-width="1.8"/>
<path d="M175.7,576.2 H183.8 L186.2,578.6 V586.2 H175.7 Z" fill="none" stroke="#000" stroke-width="1.3" stroke-linejoin="round"/>
<rect x="177.4" y="576" width="5" height="3.5"/>
<rect x="180.1" y="576.7" width="1.6" height="2.1" fill="#f0f0f0"/>
<rect x="177.9" y="582.9" width="6.4" height="3.3" fill="none" stroke="#000" stroke-width="1.1"/>
<path d="M204.9,564.2 L211.1,573.1 H208.1 V581.7 H201.8 V573.1 H198.7 Z"/>
<path d="M196.3,575.4 V577.6 A8.65,8.65 0 0 0 213.6,577.6 V575.4" fill="none" stroke="#000" stroke-width="1.8"/>
</g>
<g font-family="'Liberation Mono', monospace" font-size="5.3" fill="#111">
<text x="165.9" y="567.8" textLength="15.5" lengthAdjust="spacingAndGlyphs">10010</text>
<text x="165.9" y="574.1" textLength="15.5" lengthAdjust="spacingAndGlyphs">01001</text>
</g>
</svg>
</body>
</html>
